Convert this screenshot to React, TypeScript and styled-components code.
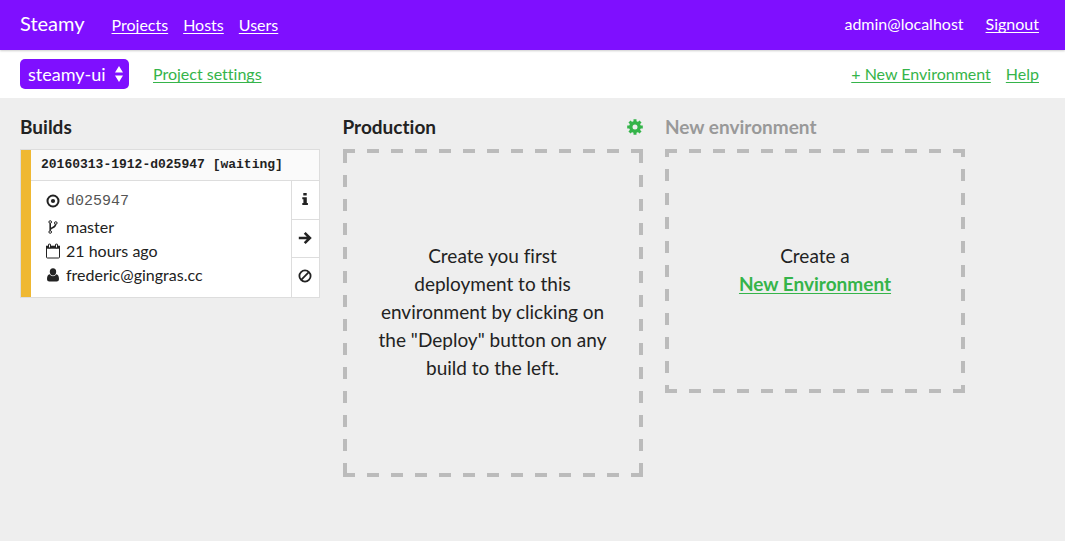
import React from "react";
import styled, { createGlobalStyle, css } from "styled-components";

const purple = "#7f0fff";
const green = "#35b44a";
const ink = "#222";
const line = "#ddd";

const GlobalStyle = createGlobalStyle`
  *, *::before, *::after { box-sizing: border-box; }
  html { background: #eee; }
  body {
    margin: 0;
    background: #eee;
    color: ${ink};
    font-family: Lato, "Open Sans", sans-serif;
    font-size: 16px;
    line-height: 24px;
    font-variant-ligatures: none;
  }
  h1, h2, h3, p, ul { margin: 0; padding: 0; }
`;

const TopBar = styled.header`
  position: relative;
  display: flex;
  align-items: center;
  justify-content: space-between;
  min-height: 50px;
  padding: 0 26px 2px 20px;
  background: ${purple};
  color: #fff;
  box-shadow: 0 1px 2px rgba(0, 0, 0, 0.2);
`;

const Brand = styled.h1`
  font-size: 20px;
  font-weight: 400;
  line-height: 24px;
`;

const Group = styled.div<{ $gap: number }>`
  display: flex;
  align-items: baseline;
  gap: ${(p) => p.$gap}px;
`;

const Nav = styled.nav`
  display: flex;
  gap: 15px;
`;

const Link = styled.a<{ $light?: boolean }>`
  color: ${(p) => (p.$light ? "#fff" : green)};
  text-decoration: underline;
  text-decoration-thickness: 1px;
  text-underline-offset: 2px;
  text-decoration-skip-ink: none;
`;

const SubBar = styled.div`
  display: flex;
  align-items: center;
  justify-content: space-between;
  min-height: 48px;
  padding: 0 26px 0 20px;
  background: #fff;
`;

const SubGroup = styled.div<{ $gap: number }>`
  display: flex;
  align-items: center;
  gap: ${(p) => p.$gap}px;
`;

const Picker = styled.label`
  position: relative;
  display: flex;
  color: #fff;

  svg {
    position: absolute;
    right: 6px;
    top: 7px;
    pointer-events: none;
  }
`;

const PickerSelect = styled.select`
  appearance: none;
  width: 109px;
  height: 30px;
  padding: 0 24px 0 8px;
  border: 0;
  border-radius: 5px;
  background: ${purple};
  color: #fff;
  font: inherit;
  font-size: 18px;
`;

const Board = styled.main`
  display: grid;
  grid-template-columns: repeat(auto-fill, 300px);
  justify-content: space-between;
  align-items: start;
  row-gap: 20px;
  max-width: 985px;
  padding: 16px 20px;
`;

const ColumnHead = styled.div`
  display: flex;
  align-items: center;
  justify-content: space-between;
  height: 26px;
  margin-bottom: 9px;
`;

const ColumnTitle = styled.h2<{ $muted?: boolean }>`
  font-size: 19px;
  font-weight: 700;
  line-height: 24px;
  color: ${(p) => (p.$muted ? "#999" : ink)};
`;

const IconButton = styled.button`
  display: flex;
  padding: 0;
  border: 0;
  background: none;
  color: ${green};
  cursor: pointer;
`;

const Card = styled.article`
  border: 1px solid ${line};
  background: #fff;
  display: flex;
`;

const Status = styled.div`
  width: 10px;
  background: #efb832;
`;

const CardMain = styled.div`
  flex: 1;
`;

const CardTitle = styled.h3`
  padding: 0 10px;
  border-bottom: 1px solid ${line};
  background: #fafafa;
  font-family: "Liberation Mono", monospace;
  font-size: 13px;
  font-weight: 700;
  line-height: 30px;
`;

const CardBody = styled.div`
  display: flex;
  justify-content: space-between;
`;

const Facts = styled.ul`
  padding: 8px 14px 10px;
  list-style: none;
`;

const Fact = styled.li<{ $mono?: boolean }>`
  display: flex;
  align-items: center;
  gap: 5px;
  height: 24px;
  ${(p) =>
    p.$mono &&
    css`
      height: 26px;
      color: #555;
      font-family: "Liberation Mono", monospace;
      font-size: 15px;
    `}

  svg {
    color: ${ink};
  }
`;

const Actions = styled.div`
  display: flex;
  flex-direction: column;
  width: 28px;
  border-left: 1px solid ${line};
`;

const Action = styled.button`
  display: flex;
  flex: 0 0 38px;
  align-items: center;
  justify-content: center;
  padding: 0 1px 2px 0;
  border: 0;
  background: #fff;
  color: ${ink};
  cursor: pointer;

  & + & {
    border-top: 1px solid ${line};
  }
`;

const Placeholder = styled.div<{ $phase: number }>`
  --across: linear-gradient(90deg, #bbb 50%, transparent 50%);
  --down: linear-gradient(#bbb 50%, transparent 50%);
  padding: 93px 34px 95px;
  background-image: var(--across), var(--across), var(--down), var(--down);
  background-size: 24px 4px, 24px 4px, 4px 24px, 4px 24px;
  background-repeat: repeat-x, repeat-x, repeat-y, repeat-y;
  background-position: 0 0, 0 100%, 0 ${(p) => p.$phase}px, 100% ${(p) => p.$phase}px;
  font-size: 19px;
  line-height: 28px;
  text-align: center;

  a {
    display: block;
    font-weight: 700;
  }
`;

const Svg = ({ children, size = 16 }: { children: React.ReactNode; size?: number }) => (
  <svg width={size} height={size} viewBox="0 0 16 16" fill="none" stroke="currentColor" aria-hidden="true">
    {children}
  </svg>
);

const TargetIcon = () => (
  <Svg>
    <circle cx="8" cy="7" r="5.5" strokeWidth="2" />
    <circle cx="8" cy="7" r="2.1" fill="currentColor" stroke="none" />
  </Svg>
);

const BranchIcon = () => (
  <Svg>
    <circle cx="5.2" cy="3" r="1.3" />
    <circle cx="5.2" cy="13" r="1.3" />
    <circle cx="10.8" cy="4" r="1.3" />
    <path d="M5.2 4.3v7.4M5.4 10.6c.3-2.2 5-1.4 5.2-5.3" strokeWidth="1.6" />
  </Svg>
);

const CalendarIcon = () => (
  <Svg>
    <path d="M1.5 3.5h13v10.6q0 .9-.9.9H2.4q-.9 0-.9-.9z" />
    <path d="M1 2.7h14v3H1z" fill="currentColor" stroke="none" />
    <path d="M4.5 2v2M11.5 2v2" strokeWidth="3" strokeLinecap="round" />
    <path d="M4.5 2v2M11.5 2v2" stroke="#fff" strokeLinecap="round" />
  </Svg>
);

const UserIcon = () => (
  <Svg>
    <g fill="currentColor" stroke="none">
      <ellipse cx="8" cy="4.8" rx="3.2" ry="3.6" />
      <path d="M4.7 7.2C2.8 7.5 2 9.6 2 12c0 1.7 1 2.5 2.300 2.500h7.400C13 14.500 14 13.700 14 12c0-2.400-.8-4.500-2.700-4.800C10.500 8.500 9.400 9.200 8 9.200s-2.500-.7-3.300-2z" />
    </g>
  </Svg>
);

const InfoIcon = () => (
  <Svg>
    <path d="M6.300 2h3.400v2.600H6.300zM5.300 6.200h4.500v5.700h1.100V14H5.300v-2.100h1.100V8.300H5.300z" fill="currentColor" stroke="none" />
  </Svg>
);

const ArrowIcon = () => (
  <Svg>
    <path d="M1.800 8h10.800M7.700 2.800 12.900 8l-5.200 5.200" strokeWidth="2.600" />
  </Svg>
);

const BanIcon = () => (
  <Svg>
    <circle cx="8" cy="8" r="5.600" strokeWidth="1.800" />
    <path d="m4.200 11.800 7.600-7.600" strokeWidth="1.800" />
  </Svg>
);

const GearIcon = () => (
  <Svg>
    <circle cx="8" cy="8" r="4.200" strokeWidth="3.400" />
    <path
      d="M8 .2v3M8 12.800v3M.2 8h3M12.800 8h3M2.500 2.500l2.100 2.100M11.400 11.400l2.100 2.100M2.500 13.500l2.100-2.100M11.400 4.600l2.100-2.100"
      strokeWidth="3"
    />
  </Svg>
);

export default function App() {
  return (
    <>
      <GlobalStyle />
      <TopBar>
        <Group $gap={27}>
          <Brand>Steamy</Brand>
          <Nav>
            <Link $light href="#projects">Projects</Link>
            <Link $light href="#hosts">Hosts</Link>
            <Link $light href="#users">Users</Link>
          </Nav>
        </Group>
        <Group $gap={22}>
          <span>admin@localhost</span>
          <Link $light href="#signout">Signout</Link>
        </Group>
      </TopBar>
      <SubBar>
        <SubGroup $gap={24}>
          <Picker>
            <PickerSelect aria-label="Project" defaultValue="steamy-ui">
              <option>steamy-ui</option>
            </PickerSelect>
            <svg width="8" height="16" viewBox="0 0 8 16" fill="currentColor" aria-hidden="true">
              <path d="M4 0l4 6.500H0zM4 16L0 9.500h8z" />
            </svg>
          </Picker>
          <Link href="#settings">Project settings</Link>
        </SubGroup>
        <SubGroup $gap={15}>
          <Link href="#new">+ New Environment</Link>
          <Link href="#help">Help</Link>
        </SubGroup>
      </SubBar>
      <Board>
        <section>
          <ColumnHead>
            <ColumnTitle>Builds</ColumnTitle>
          </ColumnHead>
          <Card>
            <Status />
            <CardMain>
              <CardTitle>20160313-1912-d025947 [waiting]</CardTitle>
              <CardBody>
                <Facts>
                  <Fact $mono><TargetIcon />d025947</Fact>
                  <Fact><BranchIcon />master</Fact>
                  <Fact><CalendarIcon />21 hours ago</Fact>
                  <Fact><UserIcon />frederic@gingras.cc</Fact>
                </Facts>
                <Actions>
                  <Action aria-label="Details"><InfoIcon /></Action>
                  <Action aria-label="Deploy"><ArrowIcon /></Action>
                  <Action aria-label="Cancel"><BanIcon /></Action>
                </Actions>
              </CardBody>
            </CardMain>
          </Card>
        </section>
        <section>
          <ColumnHead>
            <ColumnTitle>Production</ColumnTitle>
            <IconButton aria-label="Environment settings"><GearIcon /></IconButton>
          </ColumnHead>
          <Placeholder $phase={2}>
            <p>
              Create you first
              <br />
              deployment to this
              <br />
              environment by clicking on
              <br />
              the "Deploy" button on any
              <br />
              build to the left.
            </p>
          </Placeholder>
        </section>
        <section>
          <ColumnHead>
            <ColumnTitle $muted>New environment</ColumnTitle>
          </ColumnHead>
          <Placeholder $phase={-4}>
            <p>
              Create a <Link href="#new">New Environment</Link>
            </p>
          </Placeholder>
        </section>
      </Board>
    </>
  );
}
